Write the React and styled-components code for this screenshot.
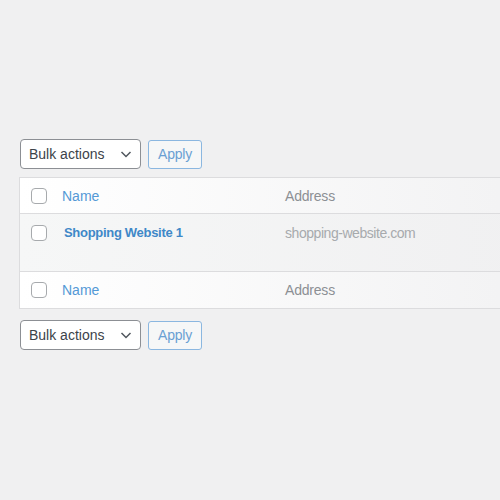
import React from 'react'
import styled, { createGlobalStyle } from 'styled-components'

const GlobalStyle = createGlobalStyle`
  html, body {
    margin: 0;
    padding: 0;
    background: #f0f0f1;
    overflow: hidden;
    font-family: "Liberation Sans", Arial, sans-serif;
    font-size: 14px;
  }
`

const Page = styled.div`
  width: 500px;
  height: 500px;
  box-sizing: border-box;
  padding: 139px 0 0 20px;
  display: flex;
  flex-direction: column;
`

const Toolbar = styled.div`
  display: flex;
  align-items: center;
  gap: 7px;
  margin: ${props => props.bottom ? '11px 0 0' : '0 0 8px'};
`

const Select = styled.div`
  width: 121px;
  height: 30px;
  box-sizing: border-box;
  border: 1px solid #8c8f94;
  border-radius: 4px;
  background: #fff;
  display: flex;
  align-items: center;
  justify-content: space-between;
  padding: 0 7px 0 8px;
  color: #3c434a;
  font-size: 14px;
`

const Button = styled.div`
  height: 29px;
  box-sizing: border-box;
  border: 1px solid #8bb7e0;
  border-radius: 3px;
  background: #f6f7f7;
  color: #6a9fd3;
  padding: 0 9px 0 9px;
  display: flex;
  align-items: center;
  font-size: 14px;
  letter-spacing: -0.2px;
`

const Table = styled.div`
  width: 520px;
  margin-left: -1px;
  border: 1px solid #dcdcde;
  border-right: none;
  box-sizing: border-box;
`

const Row = styled.div`
  display: grid;
  grid-template-columns: 42px 223px 1fr;
  height: ${props => props.tall ? '58px' : props.divider ? '37px' : '35px'};
  align-items: ${props => props.tall ? 'start' : 'center'};
  padding-top: ${props => props.tall ? '11px' : '0'};
  box-sizing: border-box;
  background: ${props => props.tall
    ? 'linear-gradient(to right, #f6f7f7, #f0f0f1)'
    : 'linear-gradient(to right, #ffffff, #f2f2f3)'};
  border-top: ${props => props.divider ? '1px solid #dcdcde' : 'none'};
`

const CheckCell = styled.div`
  display: flex;
  padding-left: 11px;
`

const Checkbox = styled.span`
  width: 16px;
  height: 16px;
  box-sizing: border-box;
  border: 1px solid #a7aaad;
  border-radius: 4px;
  background: #fff;
`

const HeadLink = styled.span`
  color: #5499d6;
  font-size: 14px;
`

const SiteLink = styled.span`
  color: #3f88c8;
  font-weight: bold;
  font-size: 13px;
  letter-spacing: -0.3px;
  padding-left: 2px;
`

const Muted = styled.span`
  color: ${props => props.light ? '#a7aaad' : '#8c8f94'};
  font-size: 14px;
  letter-spacing: ${props => props.light ? '-0.45px' : '-0.2px'};
`

function Chevron() {
  return (
    <svg width="14" height="14" viewBox="0 0 14 14">
      <path d="M2.5 5l4.5 4.5L11.5 5" fill="none" stroke="#50575e" strokeWidth="1.5" />
    </svg>
  )
}

function Actions({ bottom }) {
  return (
    <Toolbar bottom={bottom}>
      <Select>
        Bulk actions
        <Chevron />
      </Select>
      <Button>Apply</Button>
    </Toolbar>
  )
}

export default function App() {
  return (
    <Page>
      <GlobalStyle />
      <Actions />
      <Table>
        <Row>
          <CheckCell><Checkbox /></CheckCell>
          <HeadLink>Name</HeadLink>
          <Muted>Address</Muted>
        </Row>
        <Row tall divider>
          <CheckCell><Checkbox /></CheckCell>
          <SiteLink>Shopping Website 1</SiteLink>
          <Muted light>shopping-website.com</Muted>
        </Row>
        <Row divider>
          <CheckCell><Checkbox /></CheckCell>
          <HeadLink>Name</HeadLink>
          <Muted>Address</Muted>
        </Row>
      </Table>
      <Actions bottom />
    </Page>
  )
}
